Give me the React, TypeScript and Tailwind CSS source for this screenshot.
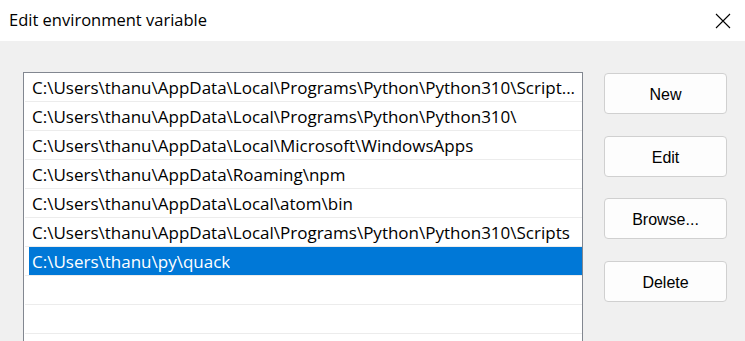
import React from "react";

const rows = [
  "C:\\Users\\thanu\\AppData\\Local\\Programs\\Python\\Python310\\Script...",
  "C:\\Users\\thanu\\AppData\\Local\\Programs\\Python\\Python310\\",
  "C:\\Users\\thanu\\AppData\\Local\\Microsoft\\WindowsApps",
  "C:\\Users\\thanu\\AppData\\Roaming\\npm",
  "C:\\Users\\thanu\\AppData\\Local\\atom\\bin",
  "C:\\Users\\thanu\\AppData\\Local\\Programs\\Python\\Python310\\Scripts",
  "C:\\Users\\thanu\\py\\quack",
  "",
  "",
  "",
];

function Btn({ label, className = "" }: { label: string; className?: string }) {
  return (
    <div
      className={
        "w-[123px] h-[41px] flex items-center justify-center pt-[2px] rounded-[4px] border border-[#d0d0d0] bg-[#fdfdfd] text-[16px] text-black " +
        className
      }
      style={{ fontFamily: '"Liberation Sans", Arial, sans-serif' }}
    >
      {label}
    </div>
  );
}

export default function App() {
  return (
    <div
      className="w-[745px] h-[341px] overflow-hidden bg-[#f0f0f0] flex flex-col"
      style={{ fontFamily: '"Open Sans", sans-serif' }}
    >
      <div className="h-[41px] shrink-0 bg-white flex items-center justify-between pl-[9px] pr-[14px]">
        <span className="text-[16.5px] text-black">Edit environment variable</span>
        <svg width="16" height="16" viewBox="0 0 16 16" className="mt-[1px]">
          <path d="M1 1 L15 15 M15 1 L1 15" stroke="#000" strokeWidth="1.1" fill="none" />
        </svg>
      </div>
      <div className="flex pt-[31px] pl-[23px]">
        <div className="w-[560px] h-[300px] shrink-0 border border-[#828790] bg-white pl-[1px]">
          {rows.map((r, i) => (
            <div key={i} className="h-[29px] border-b border-[#ececec] flex">
              <div
                className={
                  "ml-[4px] flex-1 min-w-0 flex items-center pl-[3px] pr-[3px] pt-[2px] text-[17px] whitespace-nowrap overflow-hidden " +
                  (i === 6 ? "bg-[#0078d7] text-white" : "text-black")
                }
              >
                <span className="block overflow-hidden whitespace-nowrap">{r}</span>
              </div>
            </div>
          ))}
        </div>
        <div className="flex flex-col pl-[21px] pt-[1px]">
          <Btn label="New" />
          <Btn label="Edit" className="mt-[22px]" />
          <Btn label="Browse..." className="mt-[21px]" />
          <Btn label="Delete" className="mt-[22px]" />
        </div>
      </div>
    </div>
  );
}
